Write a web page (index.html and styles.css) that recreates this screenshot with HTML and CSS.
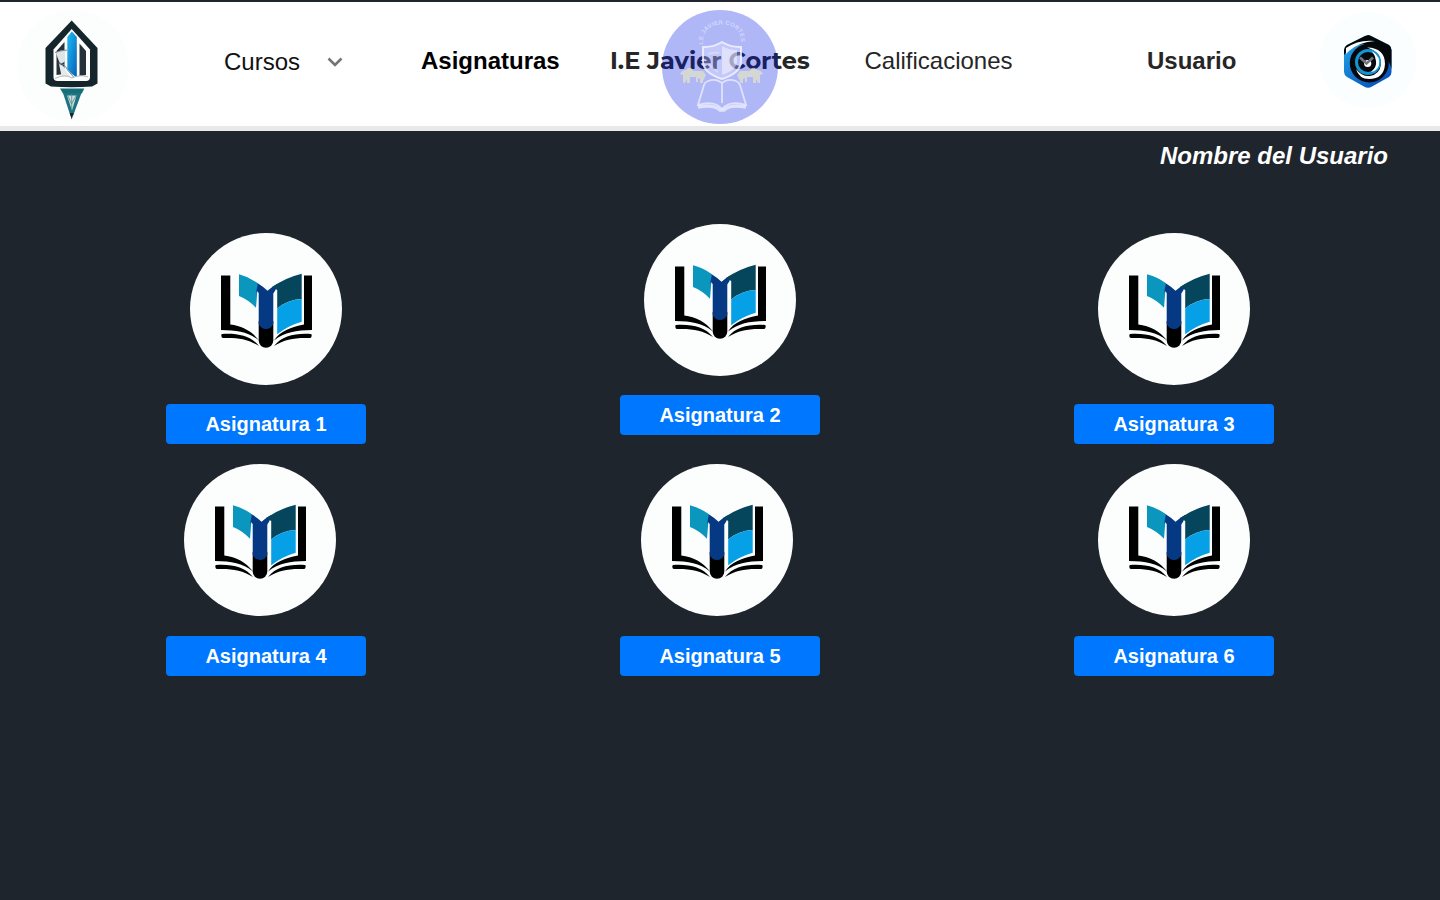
FILE: index.html
```html
<!DOCTYPE html>
<html lang="es">
<head>
<meta charset="utf-8">
<title>Asignaturas</title>
<link rel="stylesheet" href="styles.css">
</head>
<body>
<svg class="defs" aria-hidden="true">
  <symbol id="book" viewBox="0 0 152 152">
    <path d="M31 42.500h9.300V91.500C52 93 62 98 69 107.500 58 99 48 97.200 31 97z"/>
    <path d="M122 42.500h-8V91.500C101 94 90 98 84 107.500 95 99 106 97.200 122 97z"/>
    <path d="M32 101c16-1 29 2 37 12-11-7-21-8.500-36-8-2 0-2-4-1-4zM121 101c-16-1-29 2-37 12 11-7 21-8.500 36-8 2 0 2-4 1-4z"/>
    <path d="M68.700 88h14.600v19.500a7.300 7.300 0 0 1-14.600 0z"/>
    <path d="M49 41.300q10 2.500 19 9L66 74.700Q58 66.500 49 63z" fill="#0a96bd"/>
    <path d="M67.700 50.300q5 3 9.800 7.500 4.500-4 9.500-6.800L85 57l-1.700 3.500V92Q82 96 76 96T68.700 92V60L67 57.500l-1.200 3z" fill="none"/>
    <path d="M67.700 50.300q5 3 9.800 7.500 4.500-4 9.500-6.800L85.500 57l-2.200 3.500V91Q81 96 76 96 71 96 68.700 91V60L67 58l-1 3z" fill="#063984"/>
    <path d="M82 54q14-9.500 29.700-13.300V66q-14 .5-24.500 9.500V57z" fill="#06465d"/>
    <path d="M87.200 75.500Q98 66.500 111.700 66v22.700q-14 4-24.500 12.600z" fill="#05a0e5"/>
  </symbol>
</svg>
<header class="topbar">
  <svg class="logo" viewBox="0 0 112 112" aria-label="Logo">
    <defs><linearGradient id="tower" x2="1" y2="1"><stop stop-color="#20bdf5"/><stop offset="1" stop-color="#0760b8"/></linearGradient></defs>
    <circle cx="56" cy="56" r="56" fill="#fcfefe"/>
    <path d="M54.700 10.500 80.500 38v35.500L75 76.500q-20 1.500-41 0l-5.500-3V38z" fill="#14252b"/>
    <path d="M54.700 19 73 39.500V67q0 4-4 4H40.500q-4 0-4-4V39.500z" fill="#fff"/>
    <path d="M47.500 32v32l-8 1V41zM62.500 33.500l6.500 7.500v24l-6.500 1z" fill="#26323a"/>
    <path d="M50.300 27l4.500-5.500 5 5.500v40q-5-2-9.500-8z" fill="url(#tower)"/>
    <path d="M39 42.500q5-3 11-2l-2 2 .500 8q-3 4-6 2l-2-5z" fill="#dfe5e7"/>
    <path d="M38 42.500q6-2 12-2.500M41.500 53q6 0 9 7l6 7" fill="none" stroke="#7d8b90" stroke-width="1"/>
    <path d="M42 54q5 1 6.500 6l5 7-9-1z" fill="#e5eaec"/>
    <path d="M38 68.500q10-5 17-.5 8-4 16-1" fill="none" stroke="#aebabd" stroke-width="1"/>
    <path d="M43 78.500h24.300l-2.500 5H46z" fill="#176e7a"/>
    <path d="M46 83h18.500l-8.500 23h-2.500z" fill="#1d7480"/>
    <path d="M50 85.500h9.500l-4.500 15z" fill="#cadcda"/>
    <path d="M54.700 84v15M50.500 85l4 9 5-9" fill="none" stroke="#568b91" stroke-width=".8"/>
    <path d="M52.700 103h4l-2 6.500z" fill="#172529"/>
  </svg>
  <div class="cursos"><span>Cursos</span><svg class="chevron" viewBox="0 0 16 10"><path d="m1.500 1.500 6.500 6.500 6.500-6.500"/></svg></div>
  <div class="item current">Asignaturas</div>
  <div class="school">
    <span class="school-name">I.E Javier Cortes</span>
    <svg class="crest" viewBox="0 0 116 114">
      <defs><path id="arc" d="M41.500 34C37 8 83 8 78.500 34"/></defs>
      <ellipse cx="58" cy="57" rx="58" ry="57" fill="#0017e4" fill-opacity=".31"/>
      <text class="crest-text"><textPath href="#arc" textLength="60">I.E JAVIER CORTES</textPath></text>
      <g fill="#e6e4c5" fill-opacity=".7">
        <path d="M18 64q2-4 6-4l2-2q4-1 5 3h10l3 4-3 6v2h-3v-4l-2-1v4h-2v-5h-6v6h-3v-4l-2 4h-2v-8z"/>
        <path d="M101 64q-2-4-6-4l-2-2q-4-1-5 3H78l-3 4 3 6v2h3v-4l2-1v4h2v-5h6v6h3v-4l2 4h2v-8z"/>
      </g>
      <path d="M60 32q9 5.500 19 5v14q0 12-19 18-19-6-19-18V37q10 .5 19-5z" fill="#eef0ff" fill-opacity=".3" stroke="#f4f5ff" stroke-opacity=".8" stroke-width="2"/>
      <path d="M60 36q7 4 15 4v11q0 9-15 14z" fill="#fff" fill-opacity=".45"/>
      <path d="M46 44q5-2 11-1M46 54l10 8" fill="none" stroke="#fff" stroke-opacity=".3" stroke-width="2"/>
      <g fill="none" stroke="#eef0ff" stroke-opacity=".75" stroke-width="1.800">
        <path d="M60 73q-6-5-14-2-3 1-4 4l-6 20q16-5 24 4 8-9 24-4l-6-20q-1-3-4-4-8-3-14 2v20"/>
        <path d="M36 97q16-3 22 3h4q6-6 22-3" stroke-width="3.500"/>
      </g>
    </svg>
  </div>
  <div class="item grades">Calificaciones</div>
  <div class="item user">Usuario</div>
  <svg class="avatar" viewBox="0 0 98 98" aria-label="Usuario">
    <defs>
      <linearGradient id="hex" x2=".7" y2="1"><stop stop-color="#27b3ee"/><stop offset="1" stop-color="#0750bd"/></linearGradient>
      <clipPath id="hexclip"><path d="M49 25q2 0 4 1.500l17 8.500q2.500 2 2.500 5v22q0 3-2.500 5l-17 9.500q-4 2.500-8 0L28 67q-3-2-3-5V40q0-3 3-5l17-8.500q2-1.500 4-1.500z"/></clipPath>
    </defs>
    <circle cx="49" cy="50" r="48" fill="#fbfefe"/>
    <g clip-path="url(#hexclip)">
      <path d="M24 22h50v56H24z" fill="url(#hex)"/>
      <path d="M25 37Q38 22 74 24v39Q69 42 50 35 36 31 25 45z" fill="#030709"/>
      <path d="M27 38Q40 29 56 31 40 32 30 41L27 44z" fill="#fff"/>
      <circle cx="50.300" cy="53" r="19.500" fill="#05090d"/>
      <path d="M48 37.500Q66 38 66 54 65 69 50 69 40 69 37 59q6 8 14 7 10-2 11-12 0-12-14-16.500z" fill="#fff"/>
      <circle cx="49" cy="52" r="11.500" fill="none" stroke="#1694d0" stroke-width="3"/>
      <path d="M53 41q9 6 7 14-2 6-8 7 6-5 5-11-1-6-4-10z" fill="#fff"/>
      <circle cx="48" cy="52.500" r="8" fill="#080c10"/>
      <circle cx="48.700" cy="53.500" r="3.600" fill="#fff"/>
    </g>
    <path d="m41 47.500 6.500 6 6.500-6" fill="none" stroke="#73777d" stroke-width="2.600"/>
  </svg>
</header>
<p class="username">Nombre del Usuario</p>
<main class="grid">
  <section class="card"><svg class="badge"><use href="#book"/></svg><button>Asignatura 1</button></section>
  <section class="card raised"><svg class="badge"><use href="#book"/></svg><button>Asignatura 2</button></section>
  <section class="card"><svg class="badge"><use href="#book"/></svg><button>Asignatura 3</button></section>
  <section class="card low"><svg class="badge shift-lg"><use href="#book"/></svg><button>Asignatura 4</button></section>
  <section class="card low"><svg class="badge shift-sm"><use href="#book"/></svg><button>Asignatura 5</button></section>
  <section class="card low"><svg class="badge"><use href="#book"/></svg><button>Asignatura 6</button></section>
</main>
</body>
</html>
```
FILE: styles.css
```css
* { box-sizing: border-box; }
body {
  margin: 0;
  height: 900px;
  overflow: hidden;
  background: #1e252c;
  font-family: "Liberation Sans", Arial, sans-serif;
  padding-top: 2px;
}
.defs { position: absolute; width: 0; height: 0; }
.topbar {
  display: flex;
  height: 129px;
  background: #fff;
  border-bottom: 5px solid #e9e9e9;
  font-size: 24px;
  line-height: 28px;
  color: #262626;
  white-space: nowrap;
}
.logo { width: 112px; height: 112px; margin: 8px 0 0 17px; flex: none; }
.cursos {
  display: flex;
  width: 292px;
  padding: 46px 0 0 95px;
  color: #111;
}
.chevron { width: 16px; height: 10px; margin: 9px 0 0 27px; fill: none; stroke: #70757a; stroke-width: 2.6; }
.item { padding-top: 45px; }
.current { width: 189px; font-weight: 700; color: #000; }
.school { position: relative; width: 254.5px; padding-top: 45px; }
.school-name {
  display: block;
  font-family: Montserrat, Inter, sans-serif;
  font-weight: 700;
}
.crest { position: absolute; left: 52px; top: 8px; width: 116px; height: 114px; }
.crest-text { font: 700 6px "Liberation Sans", sans-serif; fill: #e4e7ff; fill-opacity: .65; }
.grades { width: 282.5px; }
.user { width: 172px; font-weight: 700; }
.avatar { width: 98px; height: 98px; margin-top: 8px; flex: none; }
.username {
  margin: 11px 52px 0 0;
  text-align: right;
  font-size: 24px;
  line-height: 28px;
  font-weight: 700;
  font-style: italic;
  color: #fff;
}
.grid {
  display: grid;
  grid-template-columns: repeat(3, 200px);
  grid-template-rows: 211px 212px;
  column-gap: 254px;
  row-gap: 20px;
  padding: 63px 0 0 166px;
}
.card { display: flex; flex-direction: column; align-items: center; gap: 19px; }
.raised { margin-top: -9px; }
.low { gap: 20px; }
.badge { width: 152px; height: 152px; flex: none; border-radius: 50%; background: #fcfefe; }
.shift-lg { margin-right: 12px; }
.shift-sm { margin-right: 6px; }
button {
  width: 200px;
  height: 40px;
  padding: 0;
  border: 0;
  border-radius: 4px;
  background: #0077ff;
  color: #fff;
  font: 700 20px "Liberation Sans", Arial, sans-serif;
}
```
